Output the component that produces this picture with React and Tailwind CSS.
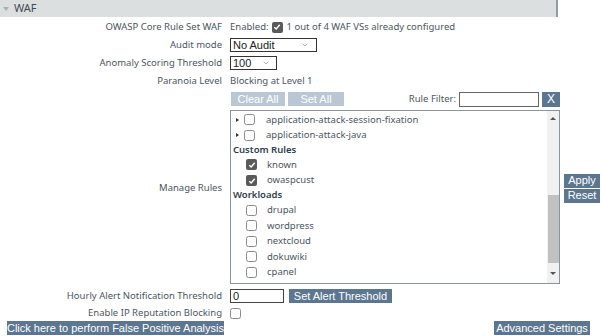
import { ChevronDown } from 'lucide-react'

const LABEL_FONT = { fontFamily: '"Noto Sans", "Open Sans", sans-serif' }
const BTN_FONT = { fontFamily: '"Liberation Sans", Arial, sans-serif' }

function Box({ checked }) {
  if (checked) {
    return (
      <span className="w-[11px] h-[11px] rounded-[2px] bg-[#5a5a5a] flex items-center justify-center shrink-0">
        <svg width="8" height="8" viewBox="0 0 8 8">
          <path d="M1.3 4.2 L3.2 6 L6.7 1.8" stroke="#fff" strokeWidth="1.4" fill="none" />
        </svg>
      </span>
    )
  }
  return <span className="block w-[11px] h-[11px] rounded-[2.5px] border border-[#8a8a8a] bg-white shrink-0" />
}

function Btn({ children, className = '' }) {
  return (
    <button
      className={`bg-[#5c7690] text-white text-[11px] leading-none h-[14px] px-[4px] flex items-center whitespace-nowrap ${className}`}
      style={BTN_FONT}
    >
      {children}
    </button>
  )
}

const RULES = ['application-attack-session-fixation', 'application-attack-java']
const CUSTOM = [
  { name: 'known', on: true },
  { name: 'owaspcust', on: true },
]
const WORKLOADS = ['drupal', 'wordpress', 'nextcloud', 'dokuwiki', 'cpanel', '']

export default function App() {
  return (
    <div className="w-[602px] h-[336px] bg-white overflow-hidden text-[#4b5661] text-[9.5px]" style={LABEL_FONT}>
      {/* header */}
      <div className="w-[558px] h-[17px] bg-[#dcdfe0] border-r-2 border-[#8e9aa5] flex items-center">
        <span className="ml-[3px] w-0 h-0 border-l-[3.5px] border-r-[3.5px] border-t-[4px] border-l-transparent border-r-transparent border-t-[#a9b0b6]" />
        <span className="ml-[5px] text-[11px] text-[#3f4a55]">WAF</span>
      </div>

      <div className="grid grid-cols-[222px_1fr] gap-x-[8px] mt-[3px]">
        <div className="h-[14px] flex items-center justify-end">OWASP Core Rule Set WAF</div>
        <div className="h-[14px] flex items-center gap-[3px]">
          <span>Enabled:</span>
          <Box checked />
          <span className="ml-[1px]">1 out of 4 WAF VSs already configured</span>
        </div>

        <div className="h-[14px] mt-[4px] flex items-center justify-end">Audit mode</div>
        <div className="h-[14px] mt-[4px] flex">
          <div className="w-[87px] h-[14px] border border-[#333] flex items-center justify-between px-[2px] text-[11px] text-[#222]" style={BTN_FONT}>
            <span>No Audit</span>
            <ChevronDown size={8} strokeWidth={1.5} className="text-[#666] mr-[5px]" />
          </div>
        </div>

        <div className="h-[14px] mt-[4px] flex items-center justify-end">Anomaly Scoring Threshold</div>
        <div className="h-[14px] mt-[4px] flex">
          <div className="w-[47px] h-[14px] border border-[#333] flex items-center justify-between px-[2px] text-[11px] text-[#222]" style={BTN_FONT}>
            <span>100</span>
            <ChevronDown size={8} strokeWidth={1.5} className="text-[#666] mr-[4px]" />
          </div>
        </div>

        <div className="h-[14px] mt-[4px] flex items-center justify-end">Paranoia Level</div>
        <div className="h-[14px] mt-[4px] flex items-center">Blocking at Level 1</div>

        <div className="mt-[4px] flex items-center justify-end">Manage Rules</div>
        <div className="mt-[4px] flex items-center">
          <div className="w-[330px] flex flex-col">
            <div className="h-[14px] flex items-center">
              <Btn className="bg-[#b9c7d5] ml-[1px] w-[54px] justify-center">Clear All</Btn>
              <Btn className="bg-[#b9c7d5] ml-[3px] w-[56px] justify-center">Set All</Btn>
              <span className="ml-auto mr-[3px]">Rule Filter:</span>
              <span className="w-[80px] h-[15px] border border-[#666] bg-white" />
              <Btn className="ml-[3px] w-[18px] h-[15px] justify-center text-[12px]">X</Btn>
            </div>
            <div className="mt-[4px] h-[174px] border border-[#8a949e] flex">
              <div className="flex-1 overflow-hidden pt-[1px]">
                {RULES.map((r) => (
                  <div key={r} className="h-[15.6px] flex items-center">
                    <span className="ml-[5px] w-0 h-0 border-t-[2.5px] border-b-[2.5px] border-l-[3px] border-t-transparent border-b-transparent border-l-[#333]" />
                    <span className="ml-[5px] flex"><Box /></span>
                    <span className="ml-[11px]">{r}</span>
                  </div>
                ))}
                <div className="h-[14px] flex items-center pl-[2px] font-semibold text-[#2f3d4b]">Custom Rules</div>
                {CUSTOM.map((c) => (
                  <div key={c.name} className="h-[15.6px] flex items-center pl-[15px]">
                    <Box checked={c.on} />
                    <span className="ml-[10px]">{c.name}</span>
                  </div>
                ))}
                <div className="h-[14px] flex items-center pl-[2px] font-semibold text-[#2f3d4b]">Workloads</div>
                {WORKLOADS.map((w, i) => (
                  <div key={i} className="h-[15.6px] flex items-center pl-[15px]">
                    <Box />
                    <span className="ml-[10px]">{w}</span>
                  </div>
                ))}
              </div>
              <div className="w-[12px] bg-[#f1f1f1] flex flex-col items-center">
                <span className="mt-[6px] w-0 h-0 border-l-[3px] border-r-[3px] border-b-[3px] border-l-transparent border-r-transparent border-b-[#555]" />
                <span className="mt-[75px] w-[11px] h-[68px] bg-[#c1c1c1]" />
                <span className="mt-[9px] w-0 h-0 border-l-[3px] border-r-[3px] border-t-[3px] border-l-transparent border-r-transparent border-t-[#555]" />
              </div>
            </div>
          </div>
          <div className="ml-[4px] flex flex-col gap-[1px]">
            <Btn className="w-[36px] justify-center">Apply</Btn>
            <Btn className="w-[36px] justify-center">Reset</Btn>
          </div>
        </div>

        <div className="h-[14px] mt-[5px] flex items-center justify-end">Hourly Alert Notification Threshold</div>
        <div className="h-[14px] mt-[5px] flex items-center">
          <span className="w-[54px] h-[14px] border border-[#444] flex items-center px-[2px] text-[11px] text-[#222]" style={BTN_FONT}>0</span>
          <Btn className="ml-[5px] w-[103px] justify-center">Set Alert Threshold</Btn>
        </div>

        <div className="h-[12px] mt-[4px] flex items-center justify-end">Enable IP Reputation Blocking</div>
        <div className="h-[12px] mt-[4px] flex items-center">
          <Box />
        </div>
      </div>

      <div className="flex items-center mt-[2px] pl-[7px] pr-[12px]">
        <Btn className="w-[217px] justify-center text-[10.4px]">Click here to perform False Positive Analysis</Btn>
        <Btn className="ml-auto w-[96px] justify-center text-[10.4px]">Advanced Settings</Btn>
      </div>
    </div>
  )
}
